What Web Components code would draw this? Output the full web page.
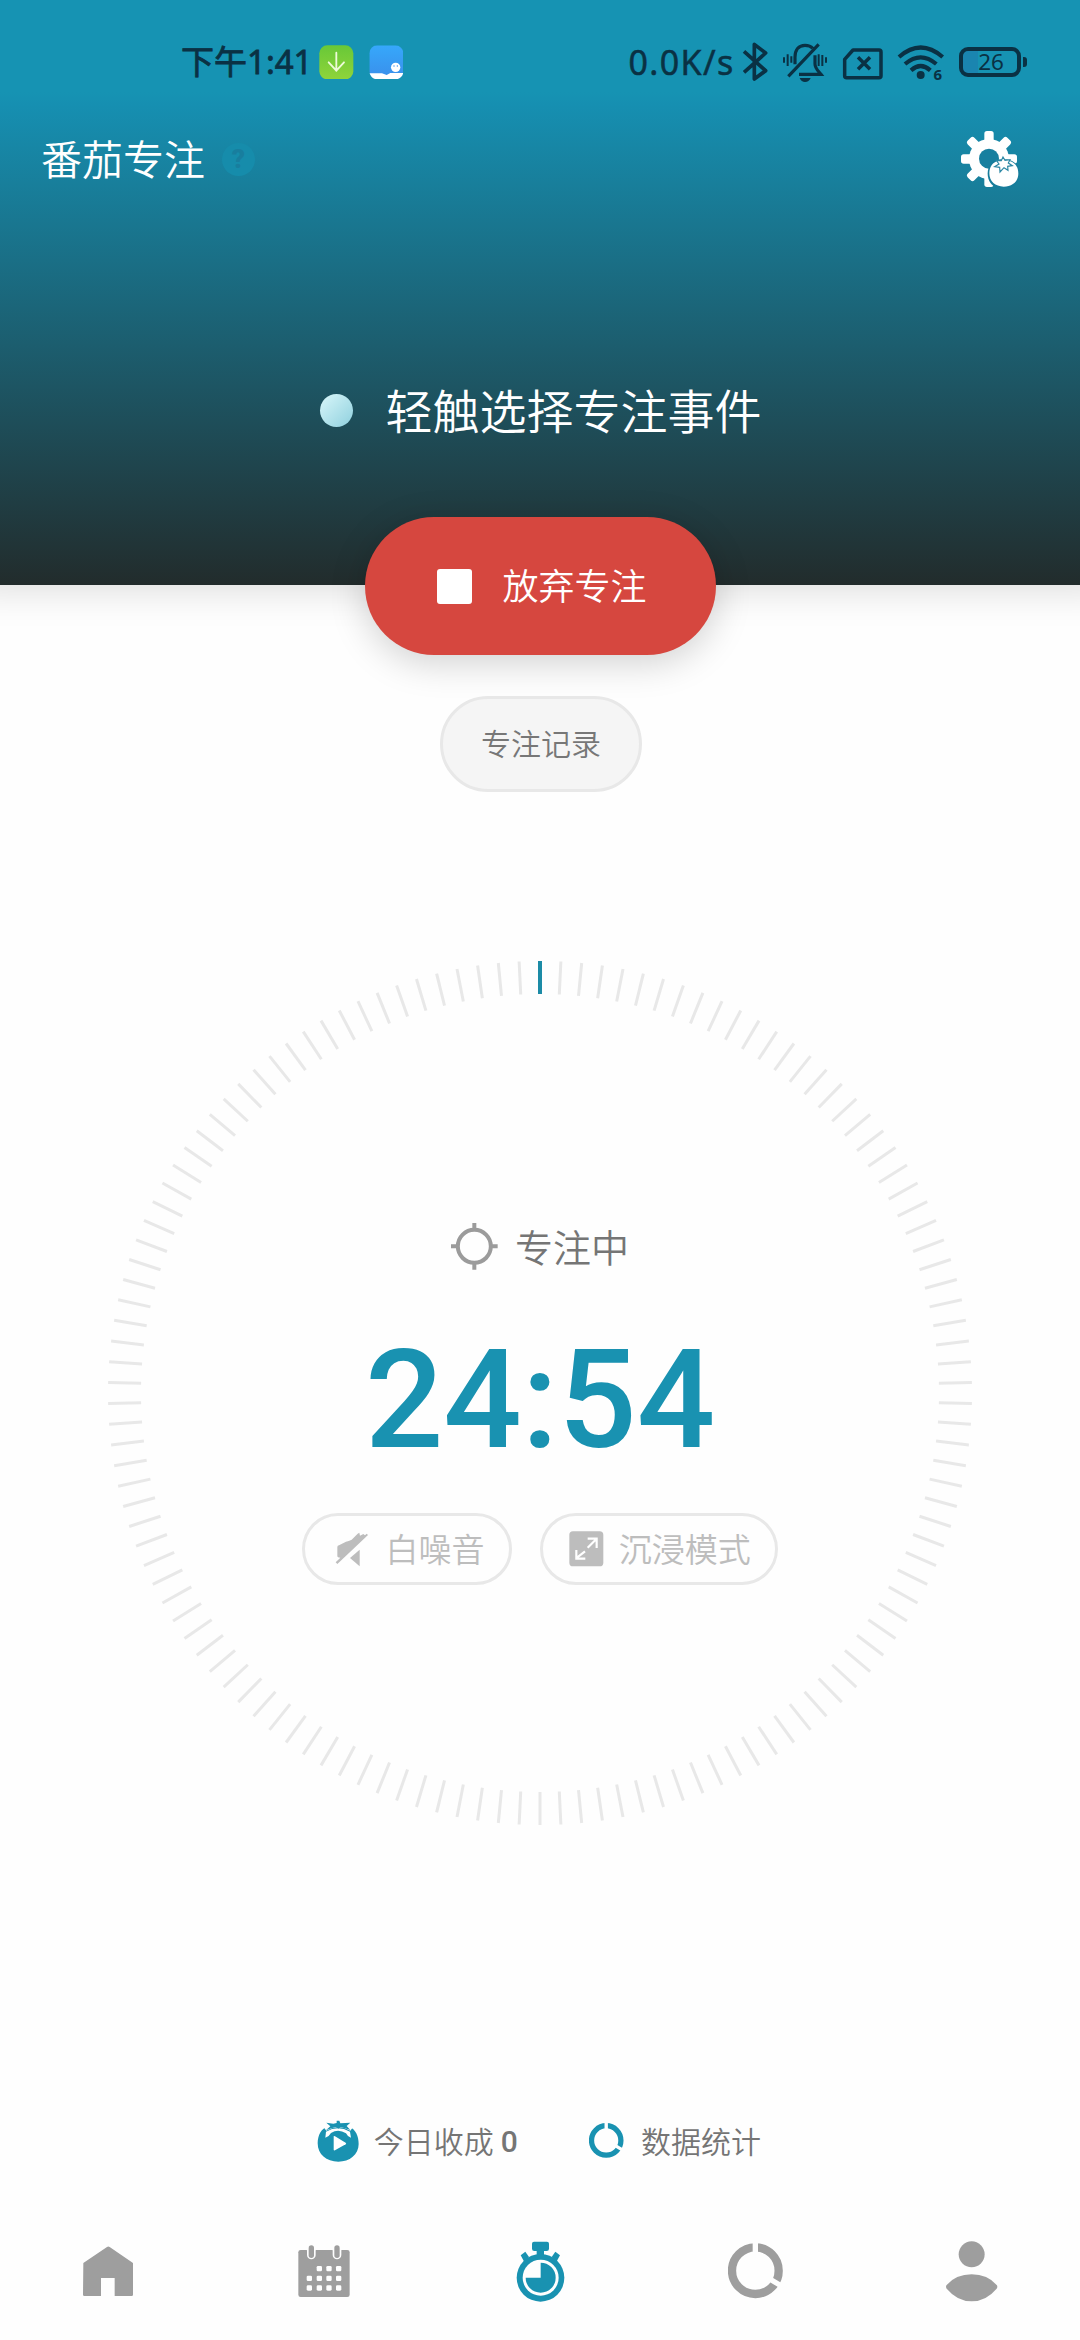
<!DOCTYPE html>
<html lang="zh-CN">
<head>
<meta charset="utf-8">
<title>番茄专注</title>
<style>
html,body{margin:0;padding:0}
body{width:1080px;height:2340px;overflow:hidden;background:#fefefe;font-family:Roboto,"Noto Sans CJK SC",sans-serif}
</style>
</head>
<body>
<focus-app></focus-app>
<script>
// Each icon: [viewBox, markup]; three viewBox units make one CSS pixel.
const ICONS = {
  download: ['476 74 104 104', `<defs><linearGradient id="g" x1="0" y1="0" x2="0" y2="1"><stop offset="0" stop-color="#68c838"/><stop offset="1" stop-color="#8fd43a"/></linearGradient></defs><rect x="477" y="75" width="102" height="102" rx="24" fill="url(#g)"/><path d="M528 97V151M505 126L528 151L551 126" fill="none" stroke="#eefbd8" stroke-width="5.5" stroke-linecap="round"/>`],
  weather: ['626 74 104 104', `<defs><linearGradient id="g" x1="0" y1="0" x2="0" y2="1"><stop offset="0" stop-color="#36a8fb"/><stop offset="1" stop-color="#3a8eea"/></linearGradient><clipPath id="c"><rect x="627" y="75" width="102" height="102" rx="24"/></clipPath></defs><g clip-path="url(#c)"><rect x="627" y="75" width="102" height="102" fill="url(#g)"/><path d="M620 159H665L679 164L690 158H735V180H620Z" fill="#fff"/></g><circle cx="706" cy="141" r="14" fill="#fff"/><circle cx="701" cy="137" r="2" fill="#3a8eea"/><circle cx="711" cy="137" r="2" fill="#3a8eea"/>`],
  bluetooth: ['423 66 78 120', `<path d="M429 94L494 152L460 177V73L494 99L429 157" fill="none" stroke="currentColor" stroke-width="11" stroke-linejoin="round"/>`],
  bell: ['543 66 138 120', `<g fill="none" stroke="currentColor" stroke-width="9.500"><path d="M582 133V112C582 88 594 76 612 76C622 76 630 79 635 85M642 106V132C642 145 651 152 660 163H594M562 169L653 73"/><path d="M549 112V128M560 103V138M571 109V128M653 103V138M664 105V138M675 112V128" stroke-width="6"/></g><path d="M596 174H629Q624 186 612 186Q601 186 596 174Z" fill="currentColor"/>`],
  sim: ['724 66 126 120', `<g fill="none" stroke="currentColor" stroke-width="10.500"><path d="M757 90H835Q841 90 841 96V167Q841 173 835 173H738Q732 173 732 167V118Z" stroke-linejoin="round"/><path d="M772 112L808 148M808 112L772 148"/></g>`],
  wifi: ['888 66 144 120', `<g fill="none" stroke="currentColor" stroke-width="12.500"><path d="M894 111Q959 54 1025 111M912 132Q959 92 1006 132M930 151Q959 125 988 151"/></g><circle cx="959" cy="165" r="12" fill="currentColor"/>`],
  settings: ['60 60 180 176', `<g fill="#fff"><circle cx="147" cy="147" r="60"/><rect x="133" y="63" width="28" height="168" rx="8"/><rect x="133" y="63" width="28" height="168" rx="8" transform="rotate(45 147 147)"/><rect x="133" y="63" width="28" height="168" rx="8" transform="rotate(90 147 147)"/><rect x="133" y="63" width="28" height="168" rx="8" transform="rotate(135 147 147)"/></g><circle cx="147" cy="146" r="30" fill="#177f9f"/><path d="M143 190C143 166 158 148 188 147C219 147 239 165 239 190C239 219 220 236 190 236C160 236 143 219 143 190Z" fill="#177c9b"/><path d="M148 190C148 170 159 156 174 153Q191 144 208 153C226 158 235 171 235 191C235 215 215 230 191 230C166 230 148 214 148 190Z" fill="#fff"/><path d="M189 141L195 151L210 149L205 159L217 167L203 169L204 181L192 173L180 186L179 172L164 170L177 162L169 151L184 152Z" fill="#fff" stroke="#2b87a4" stroke-width="3.500"/>`],
  target: ['92 98 141 141', `<g fill="none" stroke="#9b9b9b" stroke-width="12"><circle cx="162" cy="168" r="49.500"/><path d="M162 98V116M162 220V238M92 168H110M214 168H232"/></g>`],
  mute: ['162 660 102 110', `<g fill="#bdbdbd"><path d="M169 735V708Q169 704 174 703L195 692Q203 690 212 686L230 668L235 665L237 674L247 669L252 673L257 668L261 672L169 759L164 754L178 740Q169 740 169 735Z"/><path d="M236 716V766L207 741Z"/></g>`],
  expand: ['866 662 104 108', `<rect x="867" y="663" width="102" height="105" rx="11" fill="#bdbdbd"/><path d="M922 685H949V713M946 688L922 712M888 719V745H915M890 742L914 723" fill="none" stroke="#fff" stroke-width="6.500"/>`],
  harvest: ['52 88 128 127', `<path d="M54 158C54 132 66 114 82 108Q115 92 148 108C168 115 177 136 177 160C177 192 150 213 116 213C80 213 54 191 54 158Z" fill="#1992b1"/><path d="M77 141L79 123Q115 103 151 123L154 141Q142 136 139 128Q116 113 94 127Q89 137 77 141Z" fill="#fff"/><path d="M72 110L80 120Q116 98 152 120L160 110V88H72Z" fill="#fefefe"/><path d="M80 96L101 99L111 97V90H119L122 98L152 96L141 106L152 118Q135 112 122 109L116 114L109 109Q96 111 79 119L92 107Z" fill="#1992b1"/><path d="M102 138Q102 135 106 137L138 156Q141 159 138 161L106 179Q102 180 102 177Z" fill="#fff"/>`],
  stats: ['686 70 168 168', `<circle cx="768" cy="153" r="70" fill="none" stroke="currentColor" stroke-width="25"/><path d="M768 62V105M815 180L858 206" stroke="#fefefe" stroke-width="16"/>`],
  home: ['66 78 156 156', `<path d="M70 132L141 84Q145 81 149 84L219 132V227Q219 231 215 231H164V177H123V231H73Q69 231 69 227Z" fill="currentColor"/>`],
  calendar: ['714 75 157 157', `<rect x="715" y="90" width="154" height="141" rx="7" fill="currentColor"/><g fill="#fefefe"><rect x="741" y="78" width="26" height="40" rx="13"/><rect x="818" y="78" width="26" height="40" rx="13"/></g><g fill="currentColor"><rect x="746" y="76" width="16" height="38" rx="8"/><rect x="823" y="76" width="16" height="38" rx="8"/></g><g fill="#fefefe">${[[778,146],[807,146],[836,146],[748,175],[778,175],[807,175],[836,175],[748,204],[778,204],[807,204],[836,204]].map(([x,y])=>`<rect x="${x-8}" y="${y-8}" width="16" height="16" rx="4"/>`).join('')}</g>`],
  timer: ['48 61 147 183', `<g fill="currentColor"><path d="M102 63H141Q147 63 147 69V84Q147 91 140 91H132V105H110V91H103Q96 91 96 84V69Q96 63 102 63Z"/><path d="M62 104L76 93L87 109L73 124Z"/><path d="M180 104L166 93L155 109L169 124Z"/><circle cx="121.500" cy="171.500" r="71.500"/></g><circle cx="122" cy="171" r="54" fill="#fefefe"/><path d="M122 126A45 45 0 1 1 77 171H122Z" fill="currentColor"/>`],
  person: ['1336 60 160 188', `<g fill="currentColor"><circle cx="1416" cy="103" r="39"/><path d="M1341 195Q1369 163 1416 163Q1463 163 1491 195Q1495 200 1491 206Q1459 244 1416 244Q1373 244 1341 206Q1337 200 1341 195Z"/></g>`]
};

class UiIcon extends HTMLElement {
  connectedCallback(){
    const [box, body] = ICONS[this.getAttribute('name')];
    const [, , w, h] = box.split(' ').map(Number);
    const s = (Number(this.getAttribute('scale')) || 1) / 3;
    this.attachShadow({mode:'open'}).innerHTML =
      `<style>:host{display:block;flex:none}svg{display:block}</style><svg width="${w*s}" height="${h*s}" viewBox="${box}">${body}</svg>`;
  }
}
customElements.define('ui-icon', UiIcon);

function define(name, html){
  const t = document.createElement('template');
  t.innerHTML = html;
  customElements.define(name, class extends HTMLElement {
    constructor(){ super(); this.attachShadow({mode:'open'}).append(t.content.cloneNode(true)); }
  });
}

define('battery-level', `<style>
:host{display:flex;align-items:center;gap:2px}
.b{box-sizing:border-box;width:62px;height:30px;border:4px solid currentColor;border-radius:9px;font:400 22.500px/22px "Noto Sans",sans-serif;text-align:center;padding-left:2px;background:linear-gradient(90deg,#1a85b0 15px,transparent 15px)}
i{width:4px;height:10px;border-radius:0 3px 3px 0;background:currentColor}
</style><div class="b"><slot></slot></div><i></i>`);

define('status-bar', `<style>
:host{display:flex;box-sizing:border-box;height:100px;padding:42px 53px 18px 181px;color:#0a3144;font-family:"Noto Sans","Noto Sans CJK SC",sans-serif;align-items:center;justify-content:space-between}
.l,.r{display:flex;align-items:center;height:40px}
.time{font-size:33px;line-height:40px;font-weight:400;-webkit-text-stroke:.8px currentColor;width:130px;white-space:nowrap;margin-right:8px}
.w{margin-left:15px}
.speed{font-size:34px;line-height:40px;letter-spacing:1.400px;width:114px;white-space:nowrap;font-weight:400;-webkit-text-stroke:.5px currentColor}
.w6{display:flex;align-items:flex-end}
.w6 b{font-size:15px;line-height:15px;margin-left:-12px}
</style>
<div class="l"><span class="time">下午1:41</span><ui-icon name="download"></ui-icon><ui-icon class="w" name="weather"></ui-icon></div>
<div class="r"><span class="speed">0.0K/s</span><ui-icon name="bluetooth"></ui-icon><ui-icon name="bell" style="margin-left:14px"></ui-icon><ui-icon name="sim" style="margin-left:14px"></ui-icon><span class="w6" style="margin-left:13px"><ui-icon name="wifi"></ui-icon><b>6</b></span><battery-level style="margin-left:17px">26</battery-level></div>`);

define('help-badge', `<style>
:host{display:grid;place-items:center;width:33px;height:33px;border-radius:50%;background:#168cab;color:#187e9e;font:900 26px/33px Roboto,sans-serif}
</style>?`);

define('title-bar', `<style>
:host{display:flex;align-items:center;height:118px;padding:0 60px 0 41px;color:#fff}
h1{margin:0;font:350 41px/60px "Noto Sans CJK SC",sans-serif;padding-bottom:4px}
help-badge{margin-left:17px}
ui-icon{margin-left:auto}
</style><h1>番茄专注</h1><help-badge></help-badge><ui-icon name="settings"></ui-icon>`);

define('task-picker', `<style>
:host{display:flex;align-items:center;justify-content:center;color:#fff;font:350 47px/70px "Noto Sans CJK SC",sans-serif}
i{width:33px;height:33px;border-radius:50%;background:linear-gradient(135deg,#d9f7fa,#8fd0de);margin:0 33px 0 1px}
span{padding-bottom:2px}
</style><i></i><span><slot></slot></span>`);

define('app-header', `<style>
:host{display:flex;flex-direction:column;height:585px;background:linear-gradient(#1693b3 0,#1693b3 92px,#168fb1 105px,#222c2c 585px);box-shadow:0 -24px 36px 30px rgba(0,0,0,.13)}
task-picker{margin-top:156px}
</style><status-bar></status-bar><title-bar></title-bar><task-picker>轻触选择专注事件</task-picker>`);

define('stop-button', `<style>
:host{display:flex;box-sizing:border-box;align-items:center;width:351px;height:138px;border-radius:69px;background:#d6473f;color:#fff;padding-left:72px;font:350 36px/54px "Noto Sans CJK SC",sans-serif;box-shadow:0 8px 36px rgba(0,0,0,.18)}
i{width:35px;height:35px;border-radius:3px;background:#fff;margin-right:31px}
span{padding-bottom:4px}
</style><i></i><span><slot></slot></span>`);

define('record-button', `<style>
:host{display:flex;box-sizing:border-box;align-items:center;justify-content:center;width:202px;height:96px;border-radius:48px;border:3px solid #e8e8e8;background:#f5f5f5;color:#777;font:350 30px/45px "Noto Sans CJK SC",sans-serif;padding-bottom:3px;padding-left:1px}
</style><slot></slot>`);

define('outline-chip', `<style>
:host{display:flex;box-sizing:border-box;align-items:center;height:72px;border-radius:36px;border:3px solid #e8e8e8;color:#bdbdbd;font:350 33px/48px "Noto Sans CJK SC",sans-serif;white-space:nowrap}
span{padding-bottom:2px}
</style><slot name="icon"></slot><span><slot></slot></span>`);

class TimerDial extends HTMLElement {
  connectedCallback(){
    const n = 130;
    let ticks = '';
    for (let i = 1; i < n; i++) ticks += `<path d="M432 0V33" transform="rotate(${i*360/n} 432 432)"/>`;
    this.attachShadow({mode:'open'}).innerHTML = `<style>
:host{display:grid;width:864px;height:864px}
svg,.c{grid-area:1/1}
.c{display:flex;flex-direction:column;align-items:center}
.s{display:flex;align-items:center;height:58px;margin-top:256px;gap:17px;color:#757575;font:350 38px/58px "Noto Sans CJK SC",sans-serif}
.s span{padding-bottom:1px}
.t{font:500 138px/162px Roboto,sans-serif;color:#1992b1;margin-top:44px}
.p{display:flex;gap:28px;margin-top:32px}
.a{width:210px;padding-left:30px}
.b{width:238px;padding-left:26px}
.a ui-icon{margin-right:16.500px}
.b ui-icon{margin-right:15px}
</style><svg width="864" height="864" viewBox="0 0 864 864" fill="none" stroke="#e8e8e8" stroke-width="3">${ticks}<path d="M432 0V33" stroke="#1c8ba6" stroke-width="4"/></svg>
<div class="c"><div class="s"><ui-icon name="target"></ui-icon><span>专注中</span></div><div class="t">24:54</div>
<div class="p"><outline-chip class="a"><ui-icon slot="icon" name="mute"></ui-icon>白噪音</outline-chip><outline-chip class="b"><ui-icon slot="icon" name="expand"></ui-icon>沉浸模式</outline-chip></div></div>`;
  }
}
customElements.define('timer-dial', TimerDial);

define('summary-row', `<style>
:host{display:flex;align-items:center;height:46px;padding-left:317px;color:#757575;font:350 30px/46px "Noto Sans CJK SC",sans-serif;white-space:nowrap}
b{font:500 30px/46px Roboto,sans-serif;margin-left:7px;padding-top:2px}
.x,.z{padding-bottom:3px}
.x{margin-left:14px}.y{margin-left:71px;color:#1992b1}.z{margin-left:17px}
</style><ui-icon name="harvest"></ui-icon><span class="x">今日收成</span><b>0</b><ui-icon class="y" name="stats" scale=".63"></ui-icon><span class="z">数据统计</span>`);

define('tab-bar', `<style>
:host{display:grid;grid-template-columns:repeat(5,1fr);height:138px;color:#9e9e9e;align-items:center;justify-items:center}
.on{color:#1992b1}
</style><ui-icon name="home"></ui-icon><ui-icon name="calendar"></ui-icon><ui-icon class="on" name="timer"></ui-icon><ui-icon name="stats"></ui-icon><ui-icon name="person"></ui-icon>`);

define('focus-app', `<style>
:host{display:flex;flex-direction:column;width:1080px;height:2340px;background:#fefefe}
stop-button{align-self:center;margin-top:-68px}
record-button{align-self:center;margin-top:41px;margin-left:1px}
timer-dial{align-self:center;margin-top:169px}
summary-row{margin-top:293px}
tab-bar{margin-top:38px}
</style><app-header></app-header><stop-button>放弃专注</stop-button><record-button>专注记录</record-button><timer-dial></timer-dial><summary-row></summary-row><tab-bar></tab-bar>`);
</script>
</body>
</html>
